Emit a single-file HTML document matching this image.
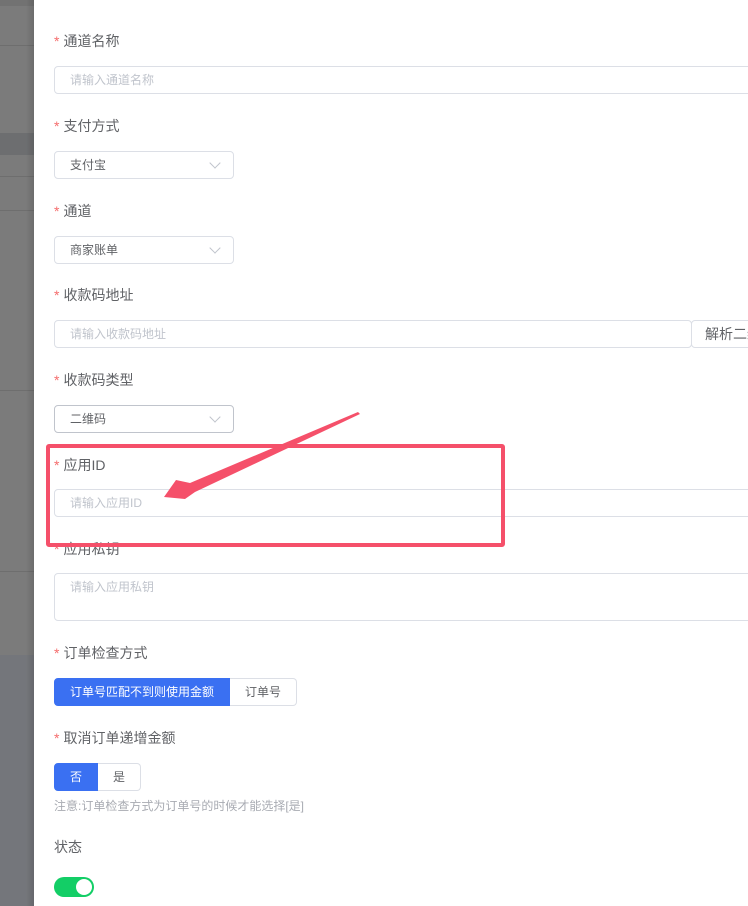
<!DOCTYPE html>
<html><head><meta charset="utf-8"><style>
*{margin:0;padding:0;box-sizing:border-box}
body{width:748px;height:906px;overflow:hidden;position:relative;background:#fff;font-family:"Liberation Sans","Noto Sans CJK SC",sans-serif}
.ov{position:absolute;left:0;top:0;width:34px;height:906px;background:#7b7b7b}
.ln{position:absolute;left:0;width:34px;height:1px;background:#6e6e6e}
.lab{position:absolute;left:54px;font-size:14px;color:#606266;line-height:20px;white-space:nowrap}
.lab i{font-style:normal;color:#f56c6c;margin-right:4px}
.inp{position:absolute;left:54px;height:28px;border:1px solid #dcdfe6;border-radius:4px;background:#fff;font-size:12px;color:#c0c4cc;padding-left:15px;line-height:26px;white-space:nowrap}
.sel{width:180px;color:#606266}
.sel:after{content:"";position:absolute;right:14px;top:7px;width:7px;height:7px;border-right:1px solid #c0c4cc;border-bottom:1px solid #c0c4cc;transform:rotate(45deg)}
.btn{position:absolute;height:28px;font-size:12px;line-height:26px;text-align:center;border:1px solid #dcdfe6;color:#606266;background:#fff;white-space:nowrap;overflow:hidden}
.on{background:#3a70f2;border-color:#3a70f2;color:#fff}
</style></head><body>
<div class="ov"></div>
<div style="position:absolute;left:0;top:0;width:34px;height:6px;background:#727272"></div>
<div class="ln" style="top:45px"></div>
<div style="position:absolute;left:0;top:133px;width:34px;height:22px;background:#6d6e70"></div>
<div class="ln" style="top:176px"></div>
<div class="ln" style="top:210px"></div>
<div class="ln" style="top:390px"></div>
<div class="ln" style="top:571px"></div>
<div style="position:absolute;left:0;top:655px;width:34px;height:251px;background:#74767b"></div>
<div style="position:absolute;left:26px;top:0;width:8px;height:906px;background:linear-gradient(90deg,rgba(0,0,0,0),rgba(0,0,0,.12))"></div>

<div class="lab" style="top:31px"><i>*</i>通道名称</div>
<div class="inp" style="top:66px;width:720px">请输入通道名称</div>

<div class="lab" style="top:116px"><i>*</i>支付方式</div>
<div class="inp sel" style="top:151px">支付宝</div>

<div class="lab" style="top:201px"><i>*</i>通道</div>
<div class="inp sel" style="top:236px">商家账单</div>

<div class="lab" style="top:285px"><i>*</i>收款码地址</div>
<div class="inp" style="top:320px;width:638px">请输入收款码地址</div>
<div class="btn" style="left:691px;top:320px;width:80px;font-size:14px;text-align:left;padding-left:13px;border-radius:4px 0 0 4px">解析二维码</div>

<div class="lab" style="top:370px"><i>*</i>收款码类型</div>
<div class="inp sel" style="top:405px;border-color:#c0c4cc">二维码</div>

<div class="lab" style="top:455px"><i>*</i>应用ID</div>
<div class="inp" style="top:489px;width:720px">请输入应用ID</div>

<div class="lab" style="top:539px"><i>*</i>应用私钥</div>
<div class="inp" style="top:573px;width:720px;height:48px;line-height:26px">请输入应用私钥</div>

<div class="lab" style="top:643px"><i>*</i>订单检查方式</div>
<div class="btn on" style="left:54px;top:678px;width:176px;border-radius:4px 0 0 4px">订单号匹配不到则使用金额</div>
<div class="btn" style="left:230px;top:678px;width:67px;border-left:0;border-radius:0 4px 4px 0">订单号</div>

<div class="lab" style="top:728px"><i>*</i>取消订单递增金额</div>
<div class="btn on" style="left:54px;top:763px;width:44px;border-radius:4px 0 0 4px">否</div>
<div class="btn" style="left:98px;top:763px;width:43px;border-left:0;border-radius:0 4px 4px 0">是</div>
<div style="position:absolute;left:54px;top:798px;font-size:12px;color:#a8abb2;line-height:16px">注意:订单检查方式为订单号的时候才能选择[是]</div>

<div class="lab" style="top:837px">状态</div>
<div style="position:absolute;left:54px;top:877px;width:40px;height:20px;border-radius:10px;background:#13ce66"></div>
<div style="position:absolute;left:76px;top:879px;width:16px;height:16px;border-radius:50%;background:#fff"></div>

<div style="position:absolute;left:46px;top:444px;width:459px;height:103px;border:4px solid #f5506a;border-radius:3px"></div>
<svg style="position:absolute;left:0;top:0" width="748" height="906"><polygon points="358,412 190,483 176,480 164,497 185,499 195,492 360,414" fill="#f5506a"/></svg>
</body></html>
